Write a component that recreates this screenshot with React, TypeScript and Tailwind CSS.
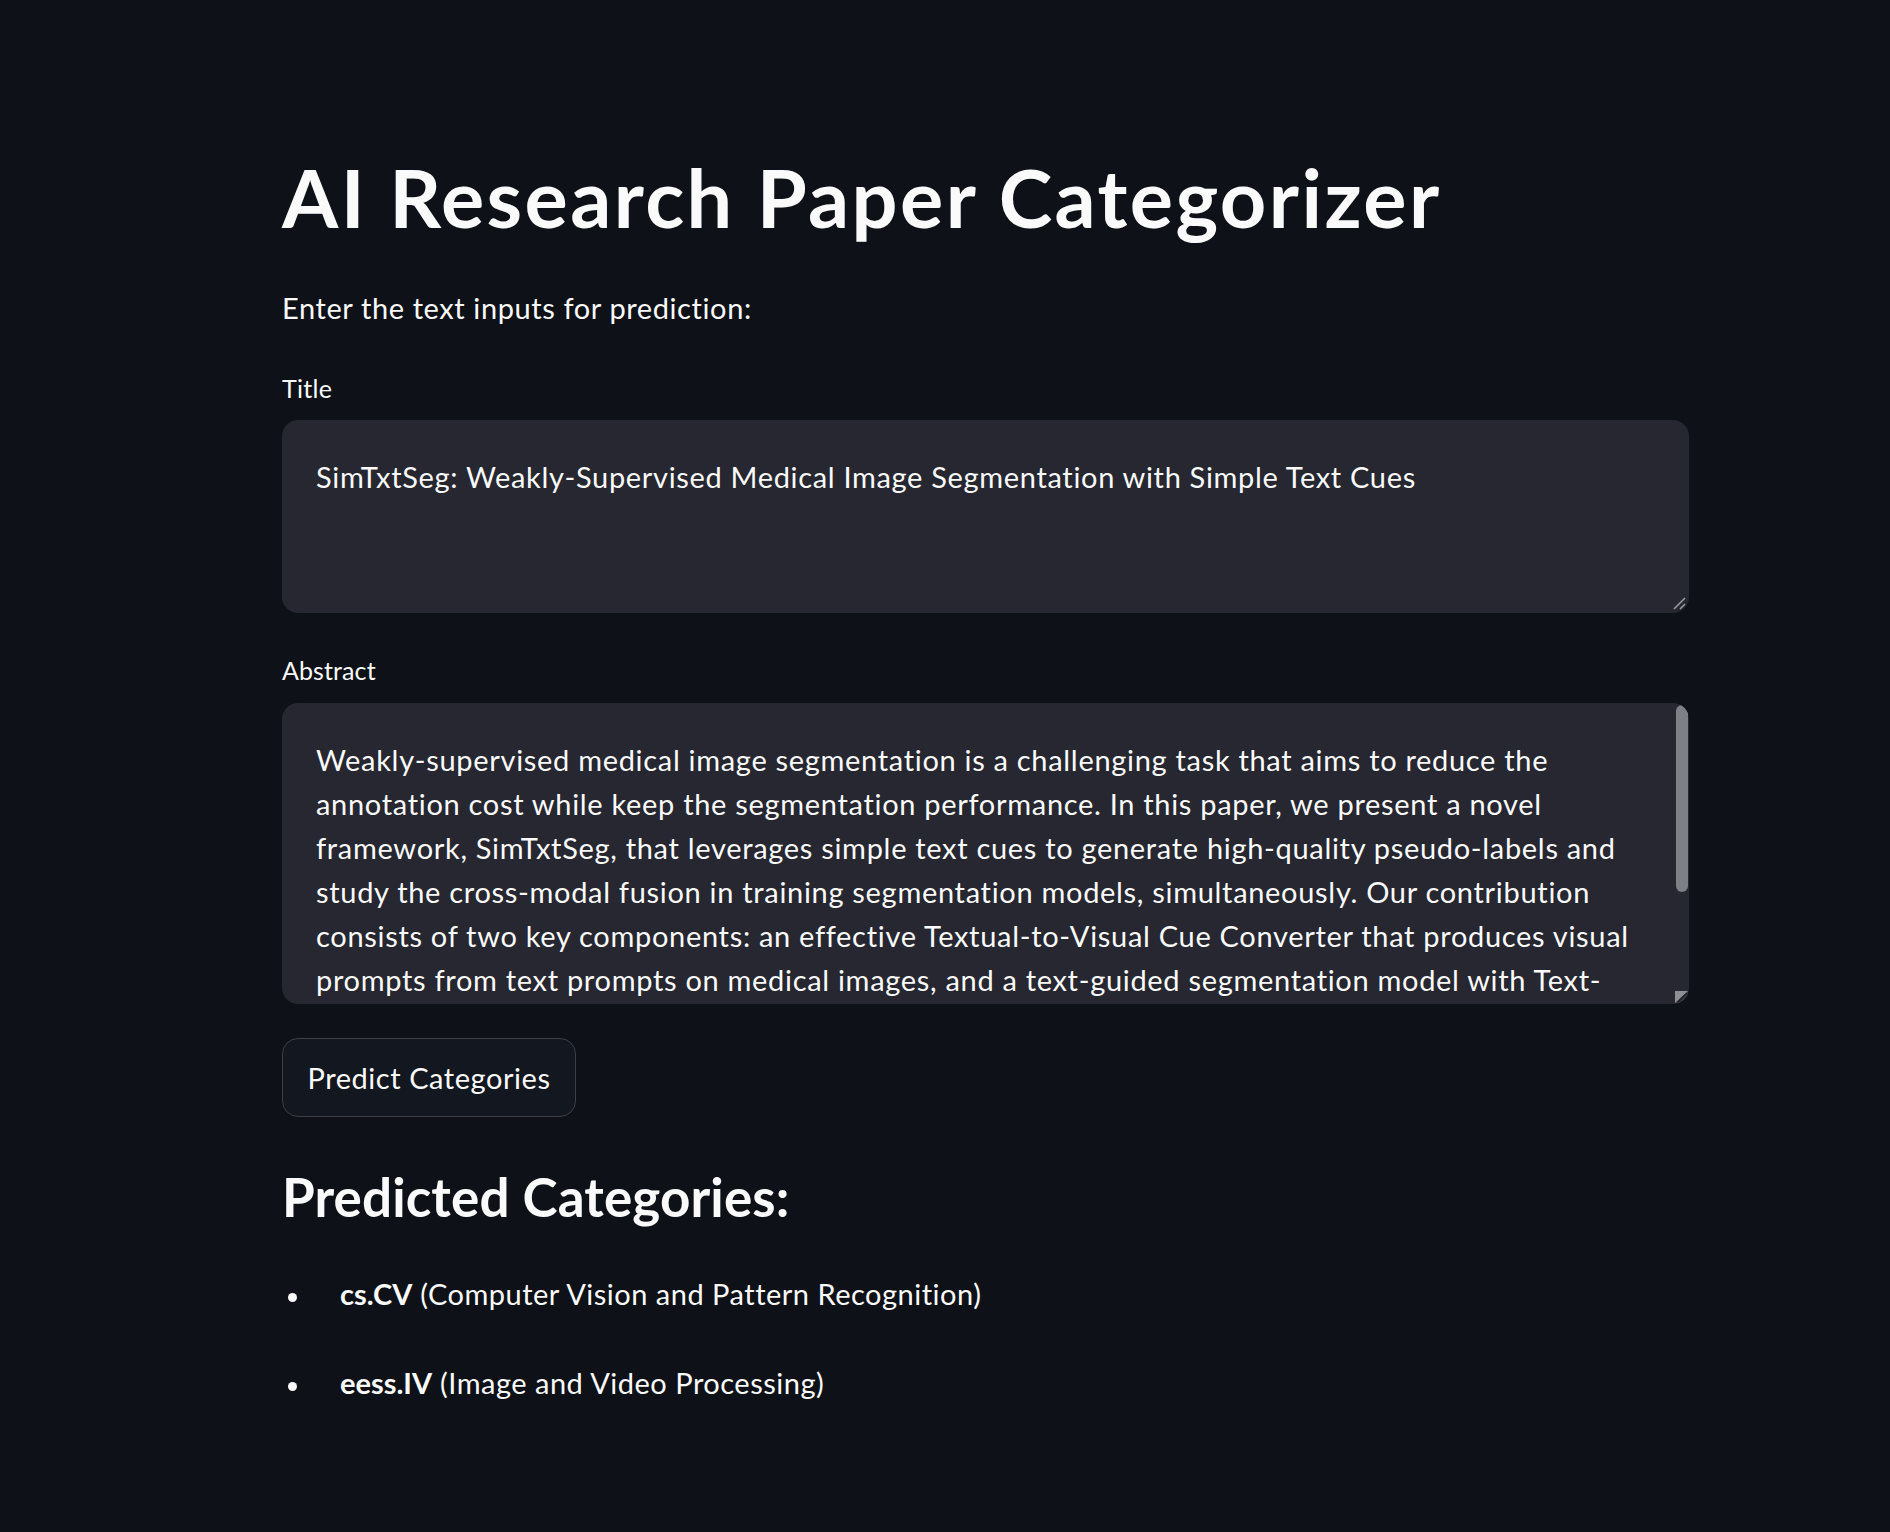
export default function App() {
  const abstractLines = [
    "Weakly-supervised medical image segmentation is a challenging task that aims to reduce the",
    "annotation cost while keep the segmentation performance. In this paper, we present a novel",
    "framework, SimTxtSeg, that leverages simple text cues to generate high-quality pseudo-labels and",
    "study the cross-modal fusion in training segmentation models, simultaneously. Our contribution",
    "consists of two key components: an effective Textual-to-Visual Cue Converter that produces visual",
    "prompts from text prompts on medical images, and a text-guided segmentation model with Text-",
  ];
  return (
    <div className="min-h-[1532px] w-full bg-[#0e1117] text-[#fafafa] font-['Lato',sans-serif]">
      <div className="ml-[282px] w-[1407px] pt-[147px] pb-[100px]">
        <h1 className="text-[81px] leading-[100px] font-bold whitespace-nowrap tracking-[2.4px]">AI Research Paper Categorizer</h1>
        <p className="mt-[39px] text-[29px] leading-[44px] tracking-[0.6px]">Enter the text inputs for prediction:</p>

        <div className="mt-[40px] text-[25px] leading-[36px] tracking-[0.3px]">Title</div>
        <div className="relative mt-[14px] h-[193px] rounded-[16px] bg-[#262730] pl-[34px] pt-[35px] text-[29px] leading-[44px] tracking-[0.67px]">
          SimTxtSeg: Weakly-Supervised Medical Image Segmentation with Simple Text Cues
          <svg className="absolute right-[3px] bottom-[3px]" width="14" height="14" viewBox="0 0 14 14">
            <line x1="2" y1="13" x2="13" y2="2" stroke="#9a9ba0" strokeWidth="1.6" />
            <line x1="8" y1="13" x2="13" y2="8" stroke="#9a9ba0" strokeWidth="1.6" />
          </svg>
        </div>

        <div className="mt-[39px] text-[25px] leading-[36px] tracking-[0.1px]">Abstract</div>
        <div className="relative mt-[15px] h-[301px] overflow-hidden rounded-[16px] bg-[#262730] pl-[34px] pt-[35px] text-[29px] leading-[44px] tracking-[0.69px]">
          {abstractLines.map((l, i) => (
            <div key={i} className="whitespace-nowrap">{l}</div>
          ))}
          <div className="absolute right-[1px] top-[2px] h-[187px] w-[12px] rounded-full bg-[#7f8086]" />
          <svg className="absolute right-[1px] bottom-[1px]" width="13" height="12" viewBox="0 0 13 12">
            <rect x="0" y="0" width="13" height="12" fill="#3a3b42" />
            <path d="M0 0 H13 L0 12 Z" fill="#8e8f95" />
            <line x1="3" y1="11" x2="12" y2="2" stroke="#1e1f25" strokeWidth="1.4" />
          </svg>
        </div>

        <button className="mt-[34px] flex h-[79px] w-[294px] items-center justify-center rounded-[16px] border border-[#3d3f46] bg-[#131720] text-[29px] leading-[44px] tracking-[0.55px] text-[#fafafa]">
          Predict Categories
        </button>

        <h3 className="mt-[45px] text-[53px] leading-[70px] font-bold tracking-[0.1px]">Predicted Categories:</h3>

        <ul className="mt-[40px] text-[29px] leading-[44px] tracking-[0.5px]">
          <li>
            <span className="ml-[6px] mr-[43px] inline-block h-[9px] w-[9px] rounded-full bg-[#fafafa] align-middle" />
            <b className="font-bold tracking-[0px]">cs.CV</b> (Computer Vision and Pattern Recognition)
          </li>
          <li className="mt-[45px]">
            <span className="ml-[6px] mr-[43px] inline-block h-[9px] w-[9px] rounded-full bg-[#fafafa] align-middle" />
            <b className="font-bold tracking-[0px]">eess.IV</b> (Image and Video Processing)
          </li>
        </ul>
      </div>
    </div>
  );
}
